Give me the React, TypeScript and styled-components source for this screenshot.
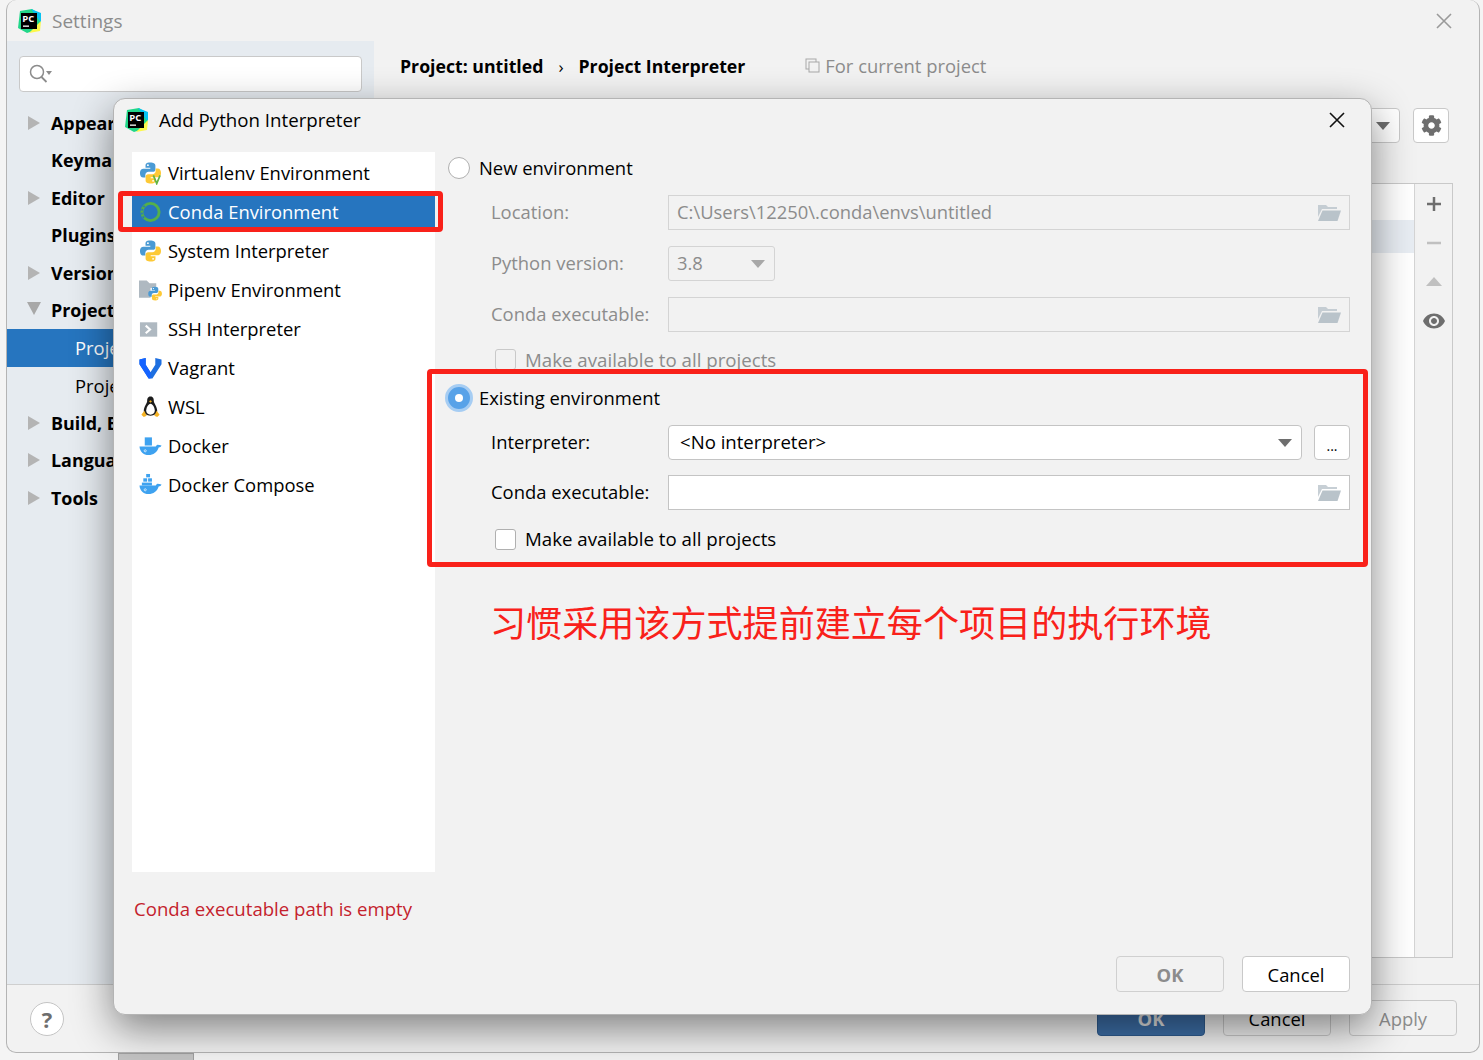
import React from "react";
import styled, { createGlobalStyle } from "styled-components";
import { FaCog } from "react-icons/fa";
import { MdVisibility } from "react-icons/md";

const FONT = `"Open Sans", "Noto Sans", sans-serif`;

const GlobalStyle = createGlobalStyle`
  html, body { margin: 0; padding: 0; background: #f4f4f4; }
  body { font-family: ${FONT}; font-size: 18.4px; color: #000; overflow: hidden; }
  * { box-sizing: border-box; }
`;

const Screen = styled.div`
  position: relative;
  width: 1483px;
  height: 1060px;
  padding: 0 3px 7px 6px;
  overflow: hidden;
`;

const BehindStrip = styled.div`
  position: absolute;
  left: 118px;
  bottom: 0;
  width: 76px;
  height: 7px;
  background: #c4c4c4;
  border: 1px solid #a0a0a0;
  border-bottom: 0;
`;

const SettingsWindow = styled.div`
  position: relative;
  height: 100%;
  display: flex;
  flex-direction: column;
  background: #f2f2f2;
  border: 1.5px solid #b4b4b4;
  border-top: 0;
  border-radius: 10px;
  overflow: hidden;
`;

const SettingsTitle = styled.div`
  height: 41px;
  flex: none;
  display: flex;
  align-items: center;
  gap: 11px;
  padding: 0 26px 0 10px;
  color: #8c8c8c;
  font-size: 19px;
`;

const CloseButton = styled.svg<{ $dim?: boolean }>`
  margin-left: auto;
  width: 18px;
  height: 18px;
  stroke: ${(p) => (p.$dim ? "#9a9a9a" : "#111")};
  stroke-width: 1.6;
  fill: none;
`;

const SettingsBody = styled.div`
  flex: 1;
  display: flex;
  min-height: 0;
`;

const Sidebar = styled.div`
  width: 367px;
  flex: none;
  background: #e6ebf0;
  padding: 15px 0 0;
`;

const SearchField = styled.div`
  margin: 0 12px;
  height: 36px;
  background: #fff;
  border: 1.5px solid #c9c9c9;
  border-radius: 4px;
  display: flex;
  align-items: center;
  padding-left: 8px;
`;

const Tree = styled.div`
  margin-top: 12px;
`;

const TreeRow = styled.div<{ $depth?: number; $selected?: boolean }>`
  height: 37.5px;
  display: flex;
  align-items: center;
  padding-left: ${(p) => (p.$depth ? 68 : 44)}px;
  position: relative;
  font-weight: ${(p) => (p.$depth ? 400 : 700)};
  font-size: ${(p) => (p.$depth ? 18.4 : 17.9)}px;
  background: ${(p) => (p.$selected ? "#2675bf" : "transparent")};
  color: ${(p) => (p.$selected ? "#fff" : "#000")};
  white-space: nowrap;
`;

const TreeArrow = styled.span<{ $open?: boolean }>`
  position: absolute;
  left: ${(p) => (p.$open ? 20 : 21)}px;
  top: 50%;
  width: 0;
  height: 0;
  ${(p) =>
    p.$open
      ? `margin-top: -8px;
         border-left: 7px solid transparent;
         border-right: 7px solid transparent;
         border-top: 13px solid #a8a8a8;`
      : `margin-top: -7px;
         border-top: 7px solid transparent;
         border-bottom: 7px solid transparent;
         border-left: 12px solid #b4b4b4;`}
`;

const MainPanel = styled.div`
  flex: 1;
  min-width: 0;
  display: flex;
  flex-direction: column;
  padding: 0 26px 26px 26px;
`;

const Breadcrumb = styled.div`
  height: 50px;
  display: flex;
  align-items: center;
  font-weight: 700;
  font-size: 17.7px;
  flex: none;
`;

const BreadcrumbSep = styled.span`
  margin: 0 15px;
  font-weight: 400;
  font-size: 17px;
`;

const ForProject = styled.span`
  margin: 0 0 2px 60px;
  font-weight: 400;
  font-size: 18.4px;
  color: #8c8c8c;
  display: inline-flex;
  align-items: center;
  gap: 5px;
`;

const ToolbarRow = styled.div`
  height: 92px;
  flex: none;
  display: flex;
  justify-content: flex-end;
  align-items: flex-start;
  gap: 13px;
  padding: 17px 4px 0 0;
`;

const ToolSelect = styled.div`
  width: 400px;
  height: 35px;
  background: #fff;
  border: 1.5px solid #c9c9c9;
  border-radius: 4px;
  display: flex;
  justify-content: flex-end;
  align-items: center;
  padding-right: 9px;
`;

const GearButton = styled.div`
  width: 36px;
  height: 35px;
  background: #fff;
  border: 1.5px solid #c9c9c9;
  border-radius: 4px;
  display: flex;
  align-items: center;
  justify-content: center;
  color: #6e6e6e;
`;

const PackageTable = styled.div`
  flex: 1;
  display: flex;
  border: 1.5px solid #c9c9c9;
  background: #fff;
`;

const PackageList = styled.div`
  flex: 1;
  padding-top: 36px;
`;

const PackageRow = styled.div`
  height: 33px;
  background: #e8edf3;
`;

const TableTools = styled.div`
  width: 38px;
  flex: none;
  background: #f2f2f2;
  border-left: 1.5px solid #d4d4d4;
  display: flex;
  flex-direction: column;
  align-items: center;
  padding-top: 11px;
  gap: 21px;
`;

const EyeIcon = styled(MdVisibility)`
  margin-top: -3px;
  color: #6e6e6e;
`;

const SettingsFooter = styled.div`
  height: 68px;
  flex: none;
  border-top: 1.5px solid #cfcfcf;
  display: flex;
  align-items: flex-start;
  padding: 15px 22px 0 23px;
`;

const HelpCircle = styled.div`
  width: 34px;
  height: 34px;
  margin-top: 2px;
  border: 1.5px solid #c4c4c4;
  border-radius: 50%;
  background: #fff;
  display: flex;
  align-items: center;
  justify-content: center;
  font-weight: 700;
  font-size: 22px;
  color: #6e6e6e;
`;

const FooterButtons = styled.div`
  margin-left: auto;
  display: flex;
  gap: 18px;
`;

const FooterButton = styled.div<{ $kind?: "primary" | "disabled" }>`
  width: 108px;
  height: 36px;
  border-radius: 4px;
  display: flex;
  align-items: center;
  justify-content: center;
  background: ${(p) => (p.$kind === "primary" ? "#3d6fa8" : "#f2f2f2")};
  border: 1.5px solid ${(p) => (p.$kind === "primary" ? "#2f5c90" : "#c9c9c9")};
  color: ${(p) => (p.$kind === "primary" ? "#e4e4e4" : p.$kind === "disabled" ? "#8c8c8c" : "#000")};
  font-weight: ${(p) => (p.$kind === "primary" ? 700 : 400)};
`;

const Modal = styled.div`
  position: absolute;
  left: 113px;
  top: 98px;
  width: 1259px;
  height: 917px;
  background: #f2f2f2;
  border: 1.5px solid #b4b4b4;
  border-radius: 12px;
  box-shadow: 0 14px 40px rgba(0, 0, 0, 0.47);
  display: flex;
  flex-direction: column;
`;

const ModalTitle = styled.div`
  height: 44px;
  flex: none;
  display: flex;
  align-items: center;
  gap: 11px;
  padding: 0 25px 3px 10px;
  font-size: 18.7px;
`;

const ModalBody = styled.div`
  flex: 1;
  min-height: 0;
  display: flex;
  padding: 9px 21px 0 18px;
`;

const EnvColumn = styled.div`
  width: 303px;
  flex: none;
  display: flex;
  flex-direction: column;
`;

const EnvList = styled.div`
  height: 720px;
  padding-top: 1px;
  background: #fff;
`;

const EnvRow = styled.div<{ $selected?: boolean }>`
  height: 39px;
  display: flex;
  align-items: center;
  gap: 6px;
  padding-left: 7px;
  background: ${(p) => (p.$selected ? "#2675bf" : "transparent")};
  color: ${(p) => (p.$selected ? "#fff" : "#000")};
`;

const EnvIcon = styled.svg`
  width: 23px;
  height: 24px;
  flex: none;
`;

const ErrorLine = styled.div`
  margin: 24px 0 0 2px;
  font-size: 18.6px;
  color: #c4222d;
`;

const FormColumn = styled.div`
  flex: 1;
  min-width: 0;
  padding-left: 14px;
`;

// text sits a little above the centre of its row in the original dialog
const RowText = styled.span<{ $lift?: number }>`
  margin-bottom: ${(p) => p.$lift ?? 2}px;
  white-space: nowrap;
`;

const RadioRow = styled.div<{ $top?: number }>`
  height: 32px;
  margin-top: ${(p) => p.$top ?? 0}px;
  display: flex;
  align-items: center;
  gap: 9px;
`;

const RadioOff = styled.span`
  width: 22px;
  height: 22px;
  margin-left: -1px;
  border-radius: 50%;
  background: #fff;
  border: 1.5px solid #b0b0b0;
  flex: none;
`;

const RadioOn = styled.span`
  width: 28px;
  height: 28px;
  margin: 0 -3px 0 -4px;
  border-radius: 50%;
  background: #58a2e8;
  border: 3px solid #a6cdf3;
  flex: none;
  display: flex;
  align-items: center;
  justify-content: center;
  &::after {
    content: "";
    width: 8px;
    height: 8px;
    border-radius: 50%;
    background: #fff;
  }
`;

const FieldRow = styled.div<{ $top: number; $disabled?: boolean }>`
  height: 35px;
  margin-top: ${(p) => p.$top}px;
  padding-left: 42px;
  display: flex;
  align-items: center;
  color: ${(p) => (p.$disabled ? "#8c8c8c" : "#000")};
`;

const FieldLabel = styled(RowText)`
  width: 177px;
  flex: none;
`;

const PathField = styled.div<{ $disabled?: boolean; $width?: number }>`
  flex: ${(p) => (p.$width ? "none" : 1)};
  width: ${(p) => (p.$width ? `${p.$width}px` : "auto")};
  height: 35px;
  display: flex;
  align-items: center;
  padding: 0 8px 0 8px;
  justify-content: space-between;
  background: ${(p) => (p.$disabled ? "#f2f2f2" : "#fff")};
  border: 1.5px solid ${(p) => (p.$disabled ? "#d4d4d4" : "#c4c4c4")};
  border-radius: ${(p) => (p.$width ? 3 : 0)}px;
`;

const ComboField = styled.div`
  flex: 1;
  min-width: 0;
  height: 35px;
  background: #fff;
  border: 1.5px solid #c4c4c4;
  border-radius: 4px;
  display: flex;
  align-items: center;
  justify-content: space-between;
  padding: 0 9px 0 11px;
  font-size: 18.6px;
`;

const EllipsisButton = styled.div`
  width: 36px;
  height: 35px;
  margin-left: 12px;
  flex: none;
  background: #fff;
  border: 1.5px solid #c4c4c4;
  border-radius: 4px;
  display: flex;
  align-items: center;
  justify-content: center;
  font-size: 14px;
  padding-top: 6px;
`;

const Caret = styled.span<{ $tone?: string; $shift?: number }>`
  width: 0;
  height: 0;
  flex: none;
  margin-right: ${(p) => p.$shift ?? 0}px;
  border-left: 7px solid transparent;
  border-right: 7px solid transparent;
  border-top: 8px solid ${(p) => p.$tone ?? "#6e6e6e"};
`;

const CheckRow = styled.div<{ $top: number; $disabled?: boolean }>`
  height: 21px;
  margin-top: ${(p) => p.$top}px;
  padding-left: 46px;
  display: flex;
  align-items: center;
  gap: 9px;
  font-size: 18.7px;
  color: ${(p) => (p.$disabled ? "#8c8c8c" : "#000")};
`;

const CheckBox = styled.span<{ $disabled?: boolean }>`
  width: 21px;
  height: 21px;
  flex: none;
  border-radius: 3px;
  background: ${(p) => (p.$disabled ? "#f2f2f2" : "#fff")};
  border: 1.5px solid ${(p) => (p.$disabled ? "#c9c9c9" : "#b0b0b0")};
`;

const Annotation = styled.div`
  margin: 46px 0 0 41px;
  height: 50px;
  line-height: 50px;
  font-family: "Noto Sans CJK SC", sans-serif;
  font-size: 36.1px;
  color: #f9211a;
  white-space: nowrap;
`;

const ModalFooter = styled.div`
  flex: none;
  height: 58px;
  display: flex;
  justify-content: flex-end;
  gap: 18px;
  padding-right: 21px;
`;

const DialogButton = styled.div<{ $disabled?: boolean }>`
  width: 108px;
  height: 36px;
  border-radius: 4px;
  display: flex;
  align-items: center;
  justify-content: center;
  background: ${(p) => (p.$disabled ? "#f2f2f2" : "#fff")};
  border: 1.5px solid ${(p) => (p.$disabled ? "#d0d0d0" : "#c9c9c9")};
  color: ${(p) => (p.$disabled ? "#8c8c8c" : "#000")};
  font-weight: ${(p) => (p.$disabled ? 700 : 400)};
`;

// red marker frames drawn over the screenshot
const RedFrame = styled.div<{ $x: number; $y: number; $w: number; $h: number }>`
  position: absolute;
  left: ${(p) => p.$x}px;
  top: ${(p) => p.$y}px;
  width: ${(p) => p.$w}px;
  height: ${(p) => p.$h}px;
  border: 5px solid #f9211a;
  border-radius: 4px;
  pointer-events: none;
`;

const PyCharmLogo = () => (
  <svg width="24" height="24" viewBox="0 0 24 24">
    <path d="M3 2 L15 0 L24 6 L22 20 L10 24 L1 19 Z" fill="#21d789" />
    <path d="M14 0 L24 4 L24 14 Z" fill="#07c3f2" />
    <path d="M12 24 L24 12 L23 22 Z" fill="#fcf84a" />
    <rect x="4" y="4" width="16" height="16" fill="#000" />
    <text x="5.200" y="12.800" fontFamily={FONT} fontSize="9.500" fontWeight="700" fill="#fff">
      PC
    </text>
    <rect x="6" y="16.500" width="6" height="1.300" fill="#fff" />
  </svg>
);

const PythonPaths = () => (
  <>
    <path
      d="M11.5 1C7.5 1 6.8 2.6 6.8 4.2V6.5h5v1H4.6C2.6 7.500 1 9 1 12s1.400 4.800 3.400 4.800H6.600v-2.600c0-2 1.500-3.400 3.500-3.400h4.500c1.500 0 2.500-1.100 2.500-2.500V4.200C17.100 2.400 15.500 1 11.500 1z"
      fill="#4a9ad4"
    />
    <circle cx="9.300" cy="3.800" r="1" fill="#fff" />
    <path
      d="M12.500 23c4 0 4.700-1.600 4.700-3.200v-2.300h-5v-1h7.200c2 0 3.600-1.500 3.600-4.500s-1.400-4.800-3.400-4.800h-2.200v2.600c0 2-1.500 3.400-3.500 3.400H9.400c-1.500 0-2.500 1.100-2.500 2.500v4.100C6.900 21.600 8.500 23 12.500 23z"
      fill="#fdc936"
    />
    <circle cx="14.700" cy="20.200" r="1" fill="#fff" />
  </>
);

const VirtualenvIcon = () => (
  <EnvIcon viewBox="0 0 24 24">
    <PythonPaths />
    <path d="M15 14.500l3.500 8.500 3.500-8.500" fill="none" stroke="#62b543" strokeWidth="1.800" />
  </EnvIcon>
);

const CondaIcon = () => (
  <EnvIcon viewBox="0 0 24 24">
    <circle cx="12" cy="12" r="9" fill="none" stroke="#55b04a" strokeWidth="3" />
    <path d="M6 5.500A9 9 0 0 0 5.500 18.500" fill="none" stroke="#2675bf" strokeWidth="1.600" strokeDasharray="2 2" />
  </EnvIcon>
);

const PythonIcon = () => (
  <EnvIcon viewBox="0 0 24 24">
    <PythonPaths />
  </EnvIcon>
);

const PipenvIcon = () => (
  <EnvIcon viewBox="0 0 24 24">
    <path d="M0 2h8l3 3h7v5H12v10H0z" fill="#afb9c1" />
    <g transform="translate(9 8) scale(0.65)">
      <PythonPaths />
    </g>
  </EnvIcon>
);

const SshIcon = () => (
  <EnvIcon viewBox="0 0 24 24">
    <rect x="1" y="5" width="18" height="15" fill="#afb9c1" />
    <path d="M7 8.500l4.500 4-4.500 4" fill="none" stroke="#fff" strokeWidth="2.200" />
  </EnvIcon>
);

const VagrantIcon = () => (
  <EnvIcon viewBox="0 0 24 24">
    <path d="M0.500 3L7 1.500V8.500L12 16.500L17 8.500V1.500L23.500 3V8L14 23H10L0.500 8Z" fill="#1e6fe0" />
    <path d="M0.500 3L7 1.500V8.500L12 16.500V23H10L0.500 8Z" fill="#1563ff" />
  </EnvIcon>
);

const TuxIcon = () => (
  <EnvIcon viewBox="0 0 24 24">
    <path d="M12 1c-3 0-3.500 2.500-3.500 5 0 2-3.500 6-3.500 10 0 3 3 5 7 5s7-2 7-5c0-4-3.500-8-3.500-10 0-2.500-.5-5-3.500-5z" fill="#1c1c1c" />
    <path d="M12 8.500c-2.200 0-4.500 4-4.500 7.500 0 2.500 2 4 4.500 4s4.500-1.500 4.500-4c0-3.500-2.300-7.500-4.500-7.500z" fill="#fff" />
    <path d="M10.500 6l1.500-1 1.500 1-1.500 1.500z" fill="#f5b325" />
    <path d="M2.500 20l3-4 2.500 5-3 1.500zM21.500 20l-3-4-2.500 5 3 1.500z" fill="#f5b325" />
  </EnvIcon>
);

const WhaleHull = () => (
  <path
    d="M0.500 12.500h17c.6-1.400 2.200-2 3-1.500.8-.2 1.700-.2 3 .5-.5 1.300-1.500 2-3 2.100C19 18.500 15 21.500 10 21.500 4.500 21.500 1 18 .5 12.500z"
    fill="#3ea2f0"
  />
);

const DockerIcon = () => (
  <EnvIcon viewBox="0 0 24 24">
    <WhaleHull />
    <rect x="6" y="3" width="7.500" height="8.500" fill="#3ea2f0" />
    <circle cx="6.500" cy="17" r="1.100" fill="none" stroke="#fff" strokeWidth="0.700" />
  </EnvIcon>
);

const ComposeIcon = () => (
  <EnvIcon viewBox="0 0 24 24">
    <WhaleHull />
    <rect x="7.500" y="0.500" width="4" height="3.500" fill="#3ea2f0" />
    <rect x="4.500" y="5" width="4" height="3.500" fill="#3ea2f0" />
    <rect x="9.500" y="5" width="4" height="3.500" fill="#3ea2f0" />
    <rect x="3" y="9.500" width="10.500" height="3" fill="#3ea2f0" />
    <circle cx="6.500" cy="17" r="1.100" fill="none" stroke="#fff" strokeWidth="0.700" />
  </EnvIcon>
);

const FolderIcon = ({ tone = "#b9c3ca" }: { tone?: string }) => (
  <svg width="24" height="18" viewBox="0 0 24 18" style={{ flex: "none" }}>
    <path d="M1 1h8l2 2h9v2H5L1 13z" fill={tone} opacity="0.8" />
    <path d="M5.500 6.500H24l-3.500 10.500H1z" fill={tone} />
  </svg>
);

const SearchIcon = () => (
  <svg width="26" height="22" viewBox="0 0 26 22">
    <circle cx="9" cy="9" r="6.500" fill="none" stroke="#8c8c8c" strokeWidth="1.500" />
    <path d="M13.500 14l5 5" stroke="#8c8c8c" strokeWidth="1.800" />
    <path d="M18 8h6l-3 4z" fill="#8c8c8c" />
  </svg>
);

const ENV_ROWS = [
  { label: "Virtualenv Environment", icon: <VirtualenvIcon /> },
  { label: "Conda Environment", icon: <CondaIcon />, selected: true },
  { label: "System Interpreter", icon: <PythonIcon /> },
  { label: "Pipenv Environment", icon: <PipenvIcon /> },
  { label: "SSH Interpreter", icon: <SshIcon /> },
  { label: "Vagrant", icon: <VagrantIcon /> },
  { label: "WSL", icon: <TuxIcon /> },
  { label: "Docker", icon: <DockerIcon /> },
  { label: "Docker Compose", icon: <ComposeIcon /> },
];

const TREE_ROWS = [
  { label: "Appearance & Behavior", arrow: true },
  { label: "Keymap" },
  { label: "Editor", arrow: true },
  { label: "Plugins" },
  { label: "Version Control", arrow: true },
  { label: "Project: untitled", arrow: true, open: true },
  { label: "Project Interpreter", depth: 1, selected: true },
  { label: "Project Structure", depth: 1 },
  { label: "Build, Execution, Deployment", arrow: true },
  { label: "Languages & Frameworks", arrow: true },
  { label: "Tools", arrow: true },
];

export default function App() {
  return (
    <Screen>
      <GlobalStyle />
      <BehindStrip />
      <SettingsWindow>
        <SettingsTitle>
          <PyCharmLogo />
          Settings
          <CloseButton $dim viewBox="0 0 18 18">
            <path d="M2 2l14 14M16 2L2 16" />
          </CloseButton>
        </SettingsTitle>
        <SettingsBody>
          <Sidebar>
            <SearchField>
              <SearchIcon />
            </SearchField>
            <Tree>
              {TREE_ROWS.map((row) => (
                <TreeRow key={row.label} $depth={row.depth} $selected={row.selected}>
                  {row.arrow && <TreeArrow $open={row.open} />}
                  {row.label}
                </TreeRow>
              ))}
            </Tree>
          </Sidebar>
          <MainPanel>
            <Breadcrumb>
              Project: untitled
              <BreadcrumbSep>›</BreadcrumbSep>
              Project Interpreter
              <ForProject>
                <svg width="15" height="15" viewBox="0 0 15 15">
                  <rect x="1" y="1" width="10" height="10" fill="none" stroke="#a8a8a8" />
                  <rect x="4" y="4" width="10" height="10" fill="#f2f2f2" stroke="#a8a8a8" />
                </svg>
                For current project
              </ForProject>
            </Breadcrumb>
            <ToolbarRow>
              <ToolSelect>
                <Caret />
              </ToolSelect>
              <GearButton>
                <FaCog size={21} />
              </GearButton>
            </ToolbarRow>
            <PackageTable>
              <PackageList>
                <PackageRow />
              </PackageList>
              <TableTools>
                <svg width="18" height="18" viewBox="0 0 18 18">
                  <path d="M9 2v14M2 9h14" stroke="#6e6e6e" strokeWidth="2.500" />
                </svg>
                <svg width="18" height="18" viewBox="0 0 18 18">
                  <path d="M2 9h14" stroke="#c0c0c0" strokeWidth="2.500" />
                </svg>
                <svg width="18" height="18" viewBox="0 0 18 18">
                  <path d="M9 4l8 9H1z" fill="#c0c0c0" />
                </svg>
                <EyeIcon size={24} />
              </TableTools>
            </PackageTable>
          </MainPanel>
        </SettingsBody>
        <SettingsFooter>
          <HelpCircle>?</HelpCircle>
          <FooterButtons>
            <FooterButton $kind="primary">OK</FooterButton>
            <FooterButton>Cancel</FooterButton>
            <FooterButton $kind="disabled">Apply</FooterButton>
          </FooterButtons>
        </SettingsFooter>
      </SettingsWindow>

      <Modal>
        <ModalTitle>
          <PyCharmLogo />
          Add Python Interpreter
          <CloseButton viewBox="0 0 18 18">
            <path d="M2 2l14 14M16 2L2 16" />
          </CloseButton>
        </ModalTitle>
        <ModalBody>
          <EnvColumn>
            <EnvList>
              {ENV_ROWS.map((row) => (
                <EnvRow key={row.label} $selected={row.selected}>
                  {row.icon}
                  {row.label}
                </EnvRow>
              ))}
            </EnvList>
            <ErrorLine>Conda executable path is empty</ErrorLine>
          </EnvColumn>
          <FormColumn>
            <RadioRow>
              <RadioOff />
              <RowText>New environment</RowText>
            </RadioRow>
            <FieldRow $top={11} $disabled>
              <FieldLabel>Location:</FieldLabel>
              <PathField $disabled>
                <RowText>C:\Users\12250\.conda\envs\untitled</RowText>
                <FolderIcon />
              </PathField>
            </FieldRow>
            <FieldRow $top={16} $disabled>
              <FieldLabel>Python version:</FieldLabel>
              <PathField $disabled $width={107}>
                <RowText>3.8</RowText>
                <Caret $tone="#a8a8a8" $shift={1} />
              </PathField>
            </FieldRow>
            <FieldRow $top={16} $disabled>
              <FieldLabel>Conda executable:</FieldLabel>
              <PathField $disabled>
                <span />
                <FolderIcon />
              </PathField>
            </FieldRow>
            <CheckRow $top={17} $disabled>
              <CheckBox $disabled />
              Make available to all projects
            </CheckRow>
            <RadioRow $top={12}>
              <RadioOn />
              <RowText>Existing environment</RowText>
            </RadioRow>
            <FieldRow $top={11}>
              <FieldLabel $lift={3}>Interpreter:</FieldLabel>
              <ComboField>
                <RowText $lift={3}>{"<No interpreter>"}</RowText>
                <Caret />
              </ComboField>
              <EllipsisButton>...</EllipsisButton>
            </FieldRow>
            <FieldRow $top={15}>
              <FieldLabel>Conda executable:</FieldLabel>
              <PathField>
                <span />
                <FolderIcon />
              </PathField>
            </FieldRow>
            <CheckRow $top={19}>
              <CheckBox />
              <RowText>Make available to all projects</RowText>
            </CheckRow>
            <Annotation>习惯采用该方式提前建立每个项目的执行环境</Annotation>
          </FormColumn>
        </ModalBody>
        <ModalFooter>
          <DialogButton $disabled>OK</DialogButton>
          <DialogButton>Cancel</DialogButton>
        </ModalFooter>
      </Modal>

      <RedFrame $x={118} $y={191} $w={325} $h={41} />
      <RedFrame $x={427} $y={369} $w={941} $h={198} />
    </Screen>
  );
}
